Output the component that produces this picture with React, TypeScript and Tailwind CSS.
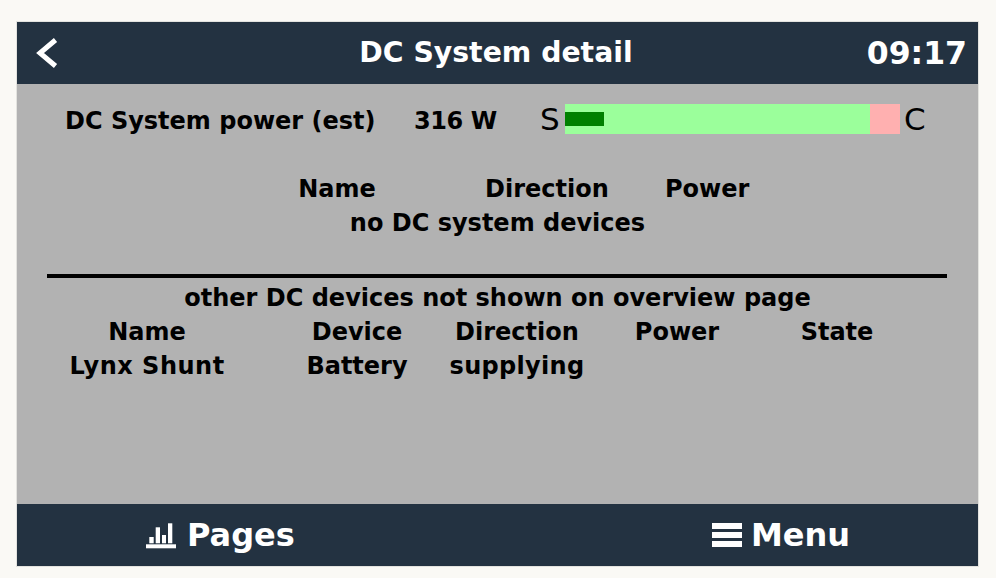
const otherHeaders = [
  { label: "Name", width: "w-[160px]" },
  { label: "Device", width: "ml-[50px] w-[160px]" },
  { label: "Direction", width: "w-[160px]" },
  { label: "Power", width: "w-[160px]" },
  { label: "State", width: "w-[160px]" },
];

const otherRow = [
  { label: "Lynx Shunt", width: "w-[160px] tracking-[0.5px]" },
  { label: "Battery", width: "ml-[50px] w-[160px]" },
  { label: "supplying", width: "w-[160px] tracking-[0.3px]" },
];

function Row({ cells }: { cells: { label: string; width: string }[] }) {
  return (
    <div className="flex h-[34px] items-center pl-[50px]">
      {cells.map((c, i) => (
        <div key={i} className={`${c.width} text-center whitespace-nowrap`}>
          {c.label}
        </div>
      ))}
    </div>
  );
}

export default function App() {
  return (
    <div className="h-[578px] w-[996px] bg-[#faf9f5] pt-[21px] pl-4 font-['DejaVu_Sans',sans-serif]">
      <div className="flex h-[546px] w-[963px] flex-col border border-[#e3e3df]">
        <header className="relative flex h-[62px] items-center justify-between bg-[#233241] pr-[11px] pl-[19px] text-white">
          <svg width="22" height="32" viewBox="0 0 22 32" className="mt-[-1px]">
            <path d="M19.5 3 L4 16 L19.5 29" fill="none" stroke="white" strokeWidth="5" />
          </svg>
          <div className="absolute inset-x-0 pr-[3px] text-center text-[28.3px] leading-[30px] font-bold">DC System detail</div>
          <div className="text-[31.5px] leading-9 font-bold">09:17</div>
        </header>

        <main className="flex-1 bg-[#b2b2b2] text-[24px] font-bold text-black">
          <div className="flex h-[71px] items-center">
            <div className="ml-[48px] w-[349px] whitespace-nowrap pt-[2px]">DC System power (est)</div>
            <div className="w-[126px] whitespace-nowrap pt-[2px] tracking-[-0.4px]">316 W</div>
            <div className="w-[25px] text-[31px] font-normal">S</div>
            <div className="relative mb-[2px] h-[30px] w-[335px] bg-[#9bff9b]">
              <div className="absolute top-2 left-0 h-[14px] w-[39px] bg-[#008000]"></div>
              <div className="absolute top-0 right-0 h-full w-[30px] bg-[#ffb0b0]"></div>
            </div>
            <div className="ml-[4px] text-[31px] font-normal">C</div>
          </div>

          <div className="mt-[17px] flex h-[34px] items-center pl-[272px]">
            <div className="w-[96px] text-center">Name</div>
            <div className="ml-[100px] w-[122px] text-center">Direction</div>
            <div className="ml-[58px] w-[84px] text-center">Power</div>
          </div>
          <div className="h-[34px] text-center leading-[34px]">no DC system devices</div>

          <div className="mx-[30px] mt-[34px] h-1 w-[900px] bg-black"></div>
          <div className="mt-[3px] h-[34px] text-center leading-[34px]">other DC devices not shown on overview page</div>
          <Row cells={otherHeaders} />
          <Row cells={otherRow} />
        </main>

        <footer className="flex h-[62px] items-center bg-[#233241] text-[32px] font-bold text-white">
          <div className="ml-[128px] flex w-[567px] items-center gap-[11px]">
            <svg width="31" height="26" viewBox="0 0 31 26" className="mt-[2px]">
              <rect x="1" y="21.3" width="30" height="4" fill="white" />
              <rect x="4.3" y="14" width="4.4" height="6.3" fill="white" />
              <rect x="10.7" y="4.3" width="4.3" height="16" fill="white" />
              <rect x="17" y="12" width="4" height="8.3" fill="white" />
              <rect x="23" y="0.3" width="4.3" height="20" fill="white" />
            </svg>
            <span>Pages</span>
          </div>
          <div className="flex items-center gap-[9px]">
            <svg width="30" height="24" viewBox="0 0 30 24">
              <rect x="0" y="0" width="30" height="6" fill="white" />
              <rect x="0" y="9" width="30" height="6" fill="white" />
              <rect x="0" y="18" width="30" height="6" fill="white" />
            </svg>
            <span>Menu</span>
          </div>
        </footer>
      </div>
    </div>
  );
}
